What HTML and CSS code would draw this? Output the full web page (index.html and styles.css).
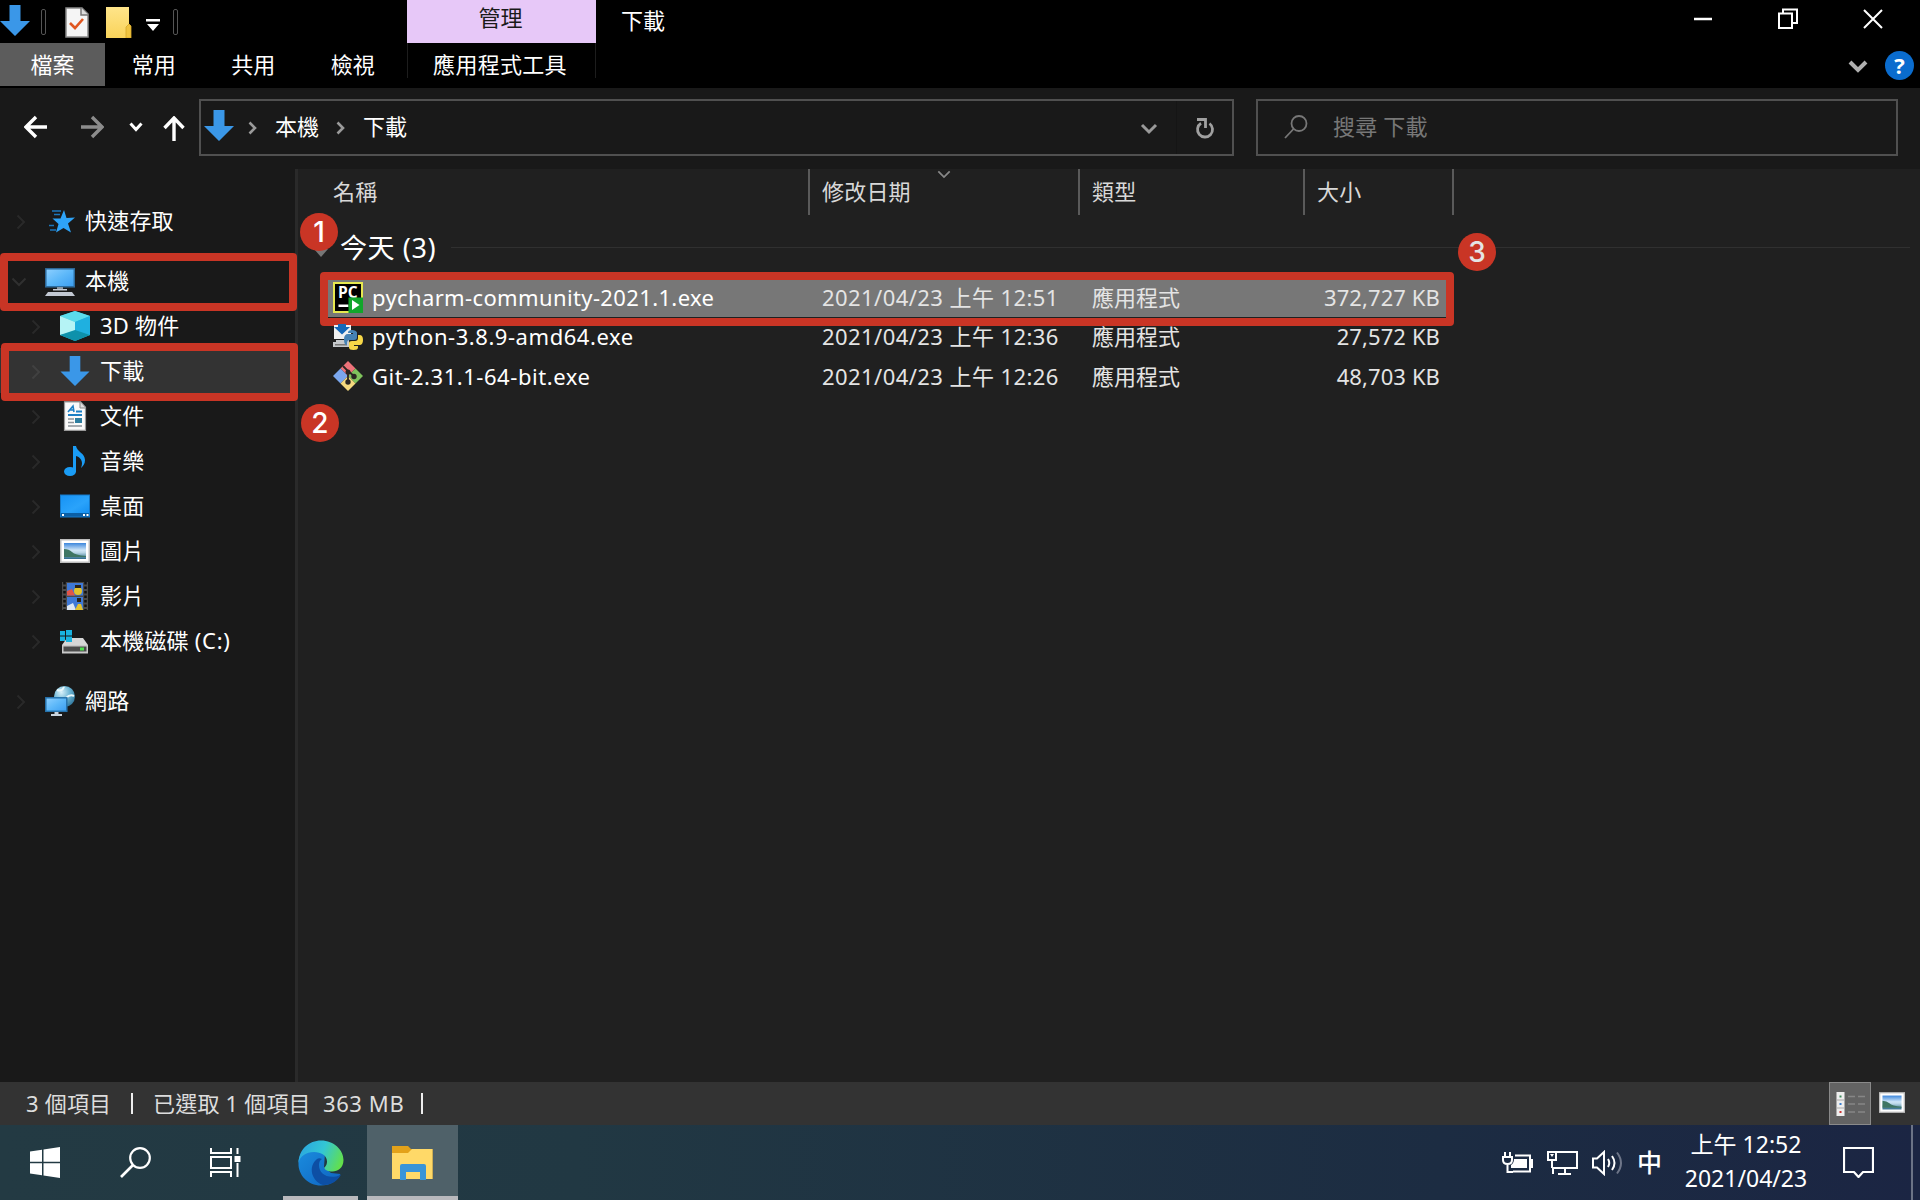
FILE: index.html
```html
<!DOCTYPE html>
<html lang="zh-Hant">
<head>
<meta charset="utf-8">
<title>下載</title>
<link rel="stylesheet" href="styles.css">
</head>
<body>
<svg width="0" height="0" class="defs">
  <defs>
    <linearGradient id="g-screen" x1="0" y1="0" x2="1" y2="1"><stop offset="0" stop-color="#8fd0ff"/><stop offset=".5" stop-color="#5db8f9"/><stop offset="1" stop-color="#3a9cf0"/></linearGradient>
    <linearGradient id="g-desk" x1="0" y1="0" x2="1" y2="1"><stop offset="0" stop-color="#1793f5"/><stop offset=".6" stop-color="#2aa3fb"/><stop offset="1" stop-color="#1590f2"/></linearGradient>
    <linearGradient id="g-photo" x1="0" y1="0" x2="0" y2="1"><stop offset="0" stop-color="#3c86dc"/><stop offset=".45" stop-color="#cfe6f7"/><stop offset=".6" stop-color="#b9d6e6"/><stop offset=".8" stop-color="#6f9fb4"/><stop offset="1" stop-color="#2f6a8c"/></linearGradient>
    <linearGradient id="g-folder" x1="0" y1="0" x2="0" y2="1"><stop offset="0" stop-color="#ffe58a"/><stop offset="1" stop-color="#f9d35a"/></linearGradient>
    <linearGradient id="g-edge-a" x1="0" y1=".3" x2="1" y2=".6"><stop offset="0" stop-color="#2aa6e0"/><stop offset=".5" stop-color="#33c6d4"/><stop offset="1" stop-color="#63e04a"/></linearGradient>
    <linearGradient id="g-edge-b" x1="0" y1="0" x2="1" y2="1"><stop offset="0" stop-color="#1b8fe0"/><stop offset="1" stop-color="#0f63c0"/></linearGradient>
    <radialGradient id="g-globe" cx=".35" cy=".3" r=".8"><stop offset="0" stop-color="#d8f1fa"/><stop offset=".5" stop-color="#6cb5d4"/><stop offset="1" stop-color="#2a6f95"/></radialGradient>
    <symbol id="down" viewBox="0 0 30 31"><path d="M9.500 0h11v16H30L15 31 0 16h9.500z" fill="#3a97e8"/></symbol>
    <symbol id="chev" viewBox="0 0 10 16"><path d="M1.500 1.500L8 8l-6.500 6.500" fill="none" stroke="currentColor" stroke-width="2"/></symbol>
    <symbol id="chevd" viewBox="0 0 16 10"><path d="M1.500 1.500L8 8l6.500-6.500" fill="none" stroke="currentColor" stroke-width="2"/></symbol>
    <symbol id="photo" viewBox="0 0 30 24"><rect width="30" height="24" fill="#bdbdbd"/><rect x="1.500" y="1.500" width="27" height="21" fill="#fff"/><rect x="4" y="4" width="22" height="16" fill="url(#g-photo)"/><path d="M4 10q5 0 8 3t14 4v1H4z" fill="#3f7663"/></symbol>
  </defs>
</svg>
<div class="window">
  <header class="titlebar">
    <div class="quick">
      <svg class="q-down" width="30" height="31"><use href="#down"/></svg>
      <i class="grip"></i>
      <svg class="q-check" width="24" height="31" viewBox="0 0 24 31"><path d="M1 1h16l6 6v23H1z" fill="#f5f5f5" stroke="#8a8a8a" stroke-width="1.500"/><path d="M16 1v7h7" fill="#ddd" stroke="#777" stroke-width="1.500"/><path d="M5 16l5 5 8-9" fill="none" stroke="#e0561f" stroke-width="2.600"/></svg>
      <svg class="q-folder" width="26" height="31" viewBox="0 0 26 31"><path d="M0 0h23v17l2 2v12H0z" fill="url(#g-folder)"/><path d="M20 31V20l3-3 2 2v12z" fill="#f0c440" stroke="#d5a728" stroke-width=".8"/></svg>
      <svg class="q-more" width="14" height="12" viewBox="0 0 14 12"><path d="M0 0h14v2.500H0zM1 5h12l-6 7z" fill="#fff"/></svg>
      <i class="grip"></i>
    </div>
    <div class="context-title">管理</div>
    <div class="win-title">下載</div>
    <div class="win-buttons">
      <svg width="20" height="30" viewBox="0 0 20 30"><path d="M1 15h18" stroke="#fff" stroke-width="2.500"/></svg>
      <svg width="20" height="30" viewBox="0 0 20 30"><g fill="none" stroke="#fff" stroke-width="2"><path d="M1 9.500h13V24H1z"/><path d="M5 9V5.500h14V19h-5"/></g></svg>
      <svg width="20" height="30" viewBox="0 0 20 30"><path d="M1 6l18 18M19 6L1 24" stroke="#fff" stroke-width="2"/></svg>
    </div>
  </header>
  <nav class="ribbon">
    <span class="tab file">檔案</span><span class="tab">常用</span><span class="tab">共用</span><span class="tab">檢視</span><span class="tab tools">應用程式工具</span>
    <div class="ribbon-end">
      <svg class="rb-chev" width="20" height="13" viewBox="0 0 20 13"><path d="M2 2l8 8 8-8" fill="none" stroke="#b0b0b0" stroke-width="4"/></svg>
      <span class="help">?</span>
    </div>
  </nav>
  <div class="address-row">
    <div class="arrows">
      <svg width="24" height="24" viewBox="0 0 24 24"><path d="M23 12H2M12 2L2 12l10 10" fill="none" stroke="#fff" stroke-width="3.400"/></svg>
      <svg width="24" height="24" viewBox="0 0 24 24"><path d="M1 12h21M12 2l10 10-10 10" fill="none" stroke="#8c8c8c" stroke-width="3.400"/></svg>
      <svg width="14" height="10" viewBox="0 0 14 10"><path d="M1.500 1.500L7 7.500l5.500-6" fill="none" stroke="#fff" stroke-width="3"/></svg>
      <svg width="22" height="25" viewBox="0 0 22 25"><path d="M11 25V2M1.500 12L11 2l9.500 10" fill="none" stroke="#fff" stroke-width="3.400"/></svg>
    </div>
    <div class="path">
      <svg class="p-down" width="30" height="31"><use href="#down"/></svg>
      <svg class="p-sep" width="9" height="14" viewBox="0 0 9 14"><path d="M1.500 1.500L7 7l-5.500 5.500" fill="none" stroke="currentColor" stroke-width="2.600"/></svg>
      <span class="crumb">本機</span>
      <svg class="p-sep" width="9" height="14" viewBox="0 0 9 14"><path d="M1.500 1.500L7 7l-5.500 5.500" fill="none" stroke="currentColor" stroke-width="2.600"/></svg>
      <span class="crumb">下載</span>
      <svg class="p-drop" width="18" height="12" viewBox="0 0 18 12"><path d="M2 2l7 7 7-7" fill="none" stroke="#999" stroke-width="3"/></svg>
      <div class="refresh"><svg width="20" height="22" viewBox="0 0 20 22"><path d="M14.500 5.500A7.500 7.500 0 1 1 6 5.200" fill="none" stroke="#a0a0a0" stroke-width="2.800"/><path d="M2 1.500h8.500V10" fill="none" stroke="#a0a0a0" stroke-width="2.800"/></svg></div>
    </div>
    <div class="search">
      <svg width="24" height="24" viewBox="0 0 24 24"><circle cx="15" cy="8.500" r="7.500" fill="none" stroke="#777" stroke-width="1.800"/><path d="M9.500 14L1 23" stroke="#777" stroke-width="1.800"/></svg>
      <span>搜尋 下載</span>
    </div>
  </div>
  <div class="body">
    <aside class="tree">
      <div class="node root"><svg class="exp" width="10" height="16"><use href="#chev"/></svg><svg class="ic" width="30" height="30" viewBox="0 0 30 30"><path d="M19 4l2.500 8 8.500-.5-7 6 3 9-7.500-4.500-7.500 4.500 2.500-8.500-6-5.500h8z" fill="#2ea3f7"/><path d="M7 5h9M9 8.500h6M4 19.500h5M5 24h6" stroke="#1c76ba" stroke-width="1.500"/></svg><span>快速存取</span></div>
      <div class="node root gap open"><svg class="exp" width="16" height="10"><use href="#chevd"/></svg><svg class="ic" width="30" height="30" viewBox="0 0 30 30"><rect x=".8" y="2.800" width="28.500" height="18" fill="url(#g-screen)" stroke="#2c6a9c" stroke-width="1.500"/><path d="M12 21h6v2h-6z" fill="#8a97a3"/><path d="M8 23h14v1.500H8zM3 26h24l3 4H0z" fill="#c3c9d3"/></svg><span>本機</span><b class="mark"></b><b class="badge">1</b></div>
      <div class="node"><svg class="exp" width="10" height="16"><use href="#chev"/></svg><svg class="ic" width="30" height="30" viewBox="0 0 30 30"><path d="M15 0l15 5v19l-15 6L0 24V5z" fill="#29bcd8"/><path d="M0 5l15-5 15 5-15 6z" fill="#5bdcec"/><path d="M0 5l15 6v10L0 24z" fill="#b5f3f5"/><path d="M15 11l15-6v19l-15-4z" fill="#1fb0e0"/><path d="M0 24l15-5 15 5-15 6z" fill="#0e91ab"/></svg><span>3D 物件</span></div>
      <div class="node current"><svg class="exp" width="10" height="16"><use href="#chev"/></svg><svg class="ic" width="30" height="30"><use href="#down"/></svg><span>下載</span><b class="mark"></b><b class="badge">2</b></div>
      <div class="node"><svg class="exp" width="10" height="16"><use href="#chev"/></svg><svg class="ic" width="30" height="30" viewBox="0 0 30 30"><path d="M4.500.8h16l5 5.500v23h-21z" fill="#fafafa" stroke="#999" stroke-width="1.200"/><path d="M20 1v6h5.500" fill="#ddd" stroke="#888"/><path d="M8 11l5-6 1 6M10 9h4" fill="none" stroke="#1b7fc4" stroke-width="1.600"/><path d="M16 10.500h6M8 14h14" stroke="#1b7fc4" stroke-width="2"/><path d="M8 18h6M8 21.500h6M8 25h14" stroke="#8b9299" stroke-width="1.500"/><path d="M15 17h7v5h-7z" fill="#2d7d9f"/></svg><span>文件</span></div>
      <div class="node"><svg class="exp" width="10" height="16"><use href="#chev"/></svg><svg class="ic" width="30" height="30" viewBox="0 0 30 30"><ellipse cx="10" cy="25.500" rx="6" ry="4.500" fill="#1a9cf5"/><path d="M13 0h3c1 6 9 7 9 14 0 4-2 6-4 8 3-7-1-11-5-12v16h-3z" fill="#1a9cf5"/></svg><span>音樂</span></div>
      <div class="node"><svg class="exp" width="10" height="16"><use href="#chev"/></svg><svg class="ic" width="30" height="30" viewBox="0 0 30 30"><rect y="3.500" width="30" height="23" fill="#1679c8"/><rect x="1" y="4.500" width="28" height="17.500" fill="url(#g-desk)"/><path d="M1 22h28v3.500H1z" fill="#0b5fa6"/><path d="M2 23h2v2H2zM23 23h2v2h-2zM26.500 23h2v2h-2z" fill="#fff"/></svg><span>桌面</span></div>
      <div class="node"><svg class="exp" width="10" height="16"><use href="#chev"/></svg><svg class="ic" width="30" height="24"><use href="#photo"/></svg><span>圖片</span></div>
      <div class="node"><svg class="exp" width="10" height="16"><use href="#chev"/></svg><svg class="ic" width="30" height="30" viewBox="0 0 30 30"><path d="M2 1h26v28H2z" fill="#4a4a4a"/><path d="M4.500 1v28M25.500 1v28" stroke="#111" stroke-width="2.500" stroke-dasharray="2.500 2"/><path d="M7 2h16v12.500H7z" fill="#3e78d6"/><path d="M7 16h16v13H7z" fill="#3e78d6"/><path d="M7 10l5-2 3 6.500H7z" fill="#e25548"/><circle cx="18" cy="10" r="4" fill="#e3c22d"/><path d="M15 4h6v3h-6z" fill="#2a2318"/><path d="M7 25l6-3 3 7H7z" fill="#dbe6f4"/><path d="M15 29l3-6h3l2 6z" fill="#e3c22d"/><path d="M17 17h4v4h-4z" fill="#2a2318"/></svg><span>影片</span></div>
      <div class="node"><svg class="exp" width="10" height="16"><use href="#chev"/></svg><svg class="ic" width="30" height="30" viewBox="0 0 30 30"><path d="M7 12h16l5 7H2z" fill="#d7d7d7"/><path d="M2 19h26v8.500H2z" fill="#c9c9c9"/><path d="M3.500 20.500h23v5h-23z" fill="#4b4b4b"/><rect x="20" y="21.500" width="4" height="3" fill="#4fe04f"/><path d="M0 5h5v4.500H0zM6 4h6v5.500H6zM0 10.500h5V15H0zM6 10.500h6V16H6z" fill="#19b3e0"/></svg><span>本機磁碟 <em>(C:)</em></span></div>
      <div class="node root gap"><svg class="exp" width="10" height="16"><use href="#chev"/></svg><svg class="ic" width="30" height="30" viewBox="0 0 30 30"><circle cx="19.500" cy="10.500" r="10.500" fill="url(#g-globe)"/><path d="M12 4q5 2 7-3M21 12q4-4 8-2" stroke="#e9f7fb" stroke-width="2" fill="none"/><rect x=".8" y="11.800" width="21" height="13.500" fill="url(#g-screen)" stroke="#2673ad" stroke-width="1.500"/><path d="M9.500 26h4v2h-4zM6 28h11v2H6z" fill="#c9d4de"/></svg><span>網路</span></div>
    </aside>
    <main class="files">
      <div class="cols head">
        <span>名稱</span><span>修改日期<svg class="sort" width="14" height="9" viewBox="0 0 16 10"><use href="#chevd"/></svg></span><span>類型</span><span>大小</span>
      </div>
      <div class="group"><svg class="tri" width="14" height="8" viewBox="0 0 14 8"><path d="M0 0h14L7 8z" fill="#777"/></svg><span>今天 (3)</span><i></i></div>
      <div class="cols row selected">
        <span class="name"><svg width="30" height="31" viewBox="0 0 30 31"><rect width="30" height="31" fill="#e6e84f"/><rect x="2" y="2" width="26" height="27" fill="#000"/><text x="5" y="16" class="pc">PC</text><path d="M5.500 22.500h10v2.500h-10z" fill="#fff"/><path d="M15.500 15.500H30V31H15.500z" fill="#11a62b"/><path d="M19 18l7.500 5-7.500 5z" fill="#fff"/></svg><em class="long">pycharm-community-2021.1.exe</em></span><span class="date">2021/04/23 上午 12:51</span><span>應用程式</span><span class="size">372,727 KB</span>
        <b class="mark"></b><b class="badge">3</b>
      </div>
      <div class="cols row">
        <span class="name"><svg width="30" height="30" viewBox="0 0 30 30"><path d="M1 3h17v14H1z" fill="#f0f0f0"/><path d="M3 18h13v2H3zM0 20h16v5H0z" fill="#c6c9cc"/><path d="M2 22h12v1.500H2z" fill="#777"/><path d="M5 2h8v3h4l-8 7.500L1 5h4z" fill="#1668b8"/><path d="M15 10.500q0-2.500 4-2.500t5 2.500v5q0 2.500-3 2.500h-4q-3 0-3 3v2q-3 0-3-5.500t4-5.500h5v-1h-5z" fill="#4682b4"/><path d="M25 13h1.500q3.500 0 3.500 5t-3.500 5H21v1h4v1.500q0 2.500-4.500 2.500T16 25.500V21q0-2 3-2h3q3 0 3-3z" fill="#f7d748"/></svg><em>python-3.8.9-amd64.exe</em></span><span class="date">2021/04/23 上午 12:36</span><span>應用程式</span><span class="size">27,572 KB</span>
      </div>
      <div class="cols row">
        <span class="name"><svg width="30" height="30" viewBox="0 0 30 30"><path d="M15 0l7.500 7.500L15 15 7.500 7.500z" fill="#ed7279"/><path d="M7.500 7.500L15 15l-7.500 7.500L0 15z" fill="#7ba7ee"/><path d="M22.500 7.500L30 15l-7.500 7.500L15 15z" fill="#7fc35c"/><path d="M15 15l7.500 7.500L15 30l-7.500-7.500z" fill="#f5d97e"/><path d="M10 5l5 5v11M15 10l6 5" stroke="#2a2622" stroke-width="1.800" fill="none"/><circle cx="15" cy="11" r="2.500" fill="#2a2622"/><circle cx="15" cy="21" r="2.700" fill="#2a2622"/><circle cx="21" cy="15.500" r="2.700" fill="#2a2622"/></svg><em>Git-2.31.1-64-bit.exe</em></span><span class="date">2021/04/23 上午 12:26</span><span>應用程式</span><span class="size">48,703 KB</span>
      </div>
    </main>
  </div>
  <footer class="status">
    <span class="st1">3 個項目</span><i></i><span class="st2">已選取 1 個項目</span><span class="st3">363 MB</span><i></i>
    <div class="views">
      <div class="view on"><svg width="30" height="24" viewBox="0 0 30 24"><path d="M0 0h9v24H0z" fill="#eee"/><path d="M0 8h9M0 16h9M.5 0v24M8.500 0v24" stroke="#aaa"/><path d="M3.500 3.500h2v2h-2z" fill="#3a8a5a"/><path d="M3.500 11h2v2h-2z" fill="#3b7fd0"/><path d="M3.500 19h2v2h-2z" fill="#c33"/><path d="M12 4.500h7M22 4.500h7M12 12h7M22 12h7M12 20h7M22 20h7" stroke="#868686" stroke-width="1.500"/></svg></div>
      <div class="view"><svg width="26" height="21" viewBox="0 0 30 24"><use href="#photo"/></svg></div>
    </div>
  </footer>
  <div class="taskbar">
    <div class="task"><svg width="30" height="31" viewBox="0 0 30 31"><path d="M0 4.500l12-1.800v12H0zM13.500 2.400L30 0v14.700H13.500zM0 16.300h12v12L0 26.500zM13.500 16.300H30V31l-16.500-2.400z" fill="#fff"/></svg></div>
    <div class="task"><svg width="31" height="31" viewBox="0 0 31 31"><circle cx="20" cy="11" r="9.800" fill="none" stroke="#fff" stroke-width="2.200"/><path d="M13 18L1 30" stroke="#fff" stroke-width="2.600"/></svg></div>
    <div class="task"><svg width="31" height="29" viewBox="0 0 31 29"><g fill="none" stroke="#fff" stroke-width="2"><path d="M1 0v5h20V0M1 29v-5h20v5M1 9h20v11H1zM27.500 0v6M27.500 15v14"/></g><path d="M24.500 8h6v6h-6z" fill="#fff"/></svg></div>
    <div class="task run edge"><svg width="46" height="46" viewBox="0 0 46 46"><path d="M.5 23C1 10 11 5 20 5l7 8-1 14 7 6 9.500 1C39 41 32 45.500 23 45.500 10 45.500 0 35 .5 23z" fill="url(#g-edge-b)"/><path d="M.5 23C1 9 11 .5 23 .5 36 .5 45.500 10 45.500 20c0 8-6 11.500-11 11.500-6 0-8.500-2.500-8-4 2-2 2.500-4 2.500-6 0-6-6-9.500-13-9.500C8 12 2 16 .5 23z" fill="url(#g-edge-a)"/><path d="M19 19c-9 7-6 22 6 26 8 .5 14-4 18-10-13 5-22-1-22-10 0-3 1-5 3-6-2-1-3.500-1-5 0z" fill="#0d4fa4"/></svg></div>
    <div class="task run active"><svg width="41" height="34" viewBox="0 0 41 34"><path d="M0 0h16l3 3h21.500v30H0z" fill="#e3a21a"/><path d="M0 7h16l4-4h20.500v30H0z" fill="#ffd968"/><path d="M8 20q0-2 2-2h22q2 0 2 2v14h-6v-8H14v8H8z" fill="#3994d8"/></svg></div>
    <div class="tray">
      <svg width="31" height="24" viewBox="0 0 31 24"><g fill="none" stroke="#fff" stroke-width="2"><path d="M13 4.500h15v16H11M28 9h2v7h-2"/><path d="M3 1v5M8 1v5M1 6h9v3q0 4-4.500 4T1 9zM5.500 13v8H11"/></g><path d="M12 8h13v9H9v-3q3-2 3-6z" fill="#fff"/></svg>
      <svg width="31" height="26" viewBox="0 0 31 26"><g fill="none" stroke="#fff" stroke-width="2"><path d="M10 2h20v16H6v6M18 18v6M11 24h13"/><path d="M1 2h8v8H1zM5 10v8"/></g><path d="M3 4l2 3 2-3z" fill="#fff"/></svg>
      <svg width="31" height="26" viewBox="0 0 31 26"><g fill="none" stroke="#fff" stroke-width="2"><path d="M1 8.500h4L12 2v22l-7-6.500H1zM16 9q2.500 4 0 8M20 6q5 7 0 14"/><path d="M25 2.500q8 10.500 0 21" stroke="#6e7689"/></g></svg>
      <span class="ime">中</span>
    </div>
    <div class="clock"><span>上午 12:52</span><span>2021/04/23</span></div>
    <svg class="note" width="31" height="31" viewBox="0 0 31 31"><path d="M1 1h29v24H20l-4.500 5L11 25H1z" fill="none" stroke="#fff" stroke-width="2.200"/></svg>
    <i class="peek"></i>
  </div>
</div>
</body>
</html>
```
FILE: styles.css
```css
* { box-sizing: border-box; }
body { margin: 0; background: #000; }
svg { display: block; flex: none; }
em { font-style: normal; }
.defs { position: absolute; }
.window {
  width: 1920px; height: 1200px; overflow: hidden;
  display: flex; flex-direction: column;
  font-family: "Noto Sans", "Noto Sans CJK TC", sans-serif;
  font-size: 22px; line-height: 30px; color: #fff; white-space: nowrap;
}
.window > * { flex: none; }

.titlebar { height: 43px; display: flex; background: #000; }
.quick { width: 407px; display: flex; align-items: flex-start; }
.q-down { margin: 5px 12px 0 0; }
.grip { width: 5px; height: 26px; margin-top: 9px; border: 1px solid #555; border-radius: 2px; }
.q-down + .grip { margin-left: -1px; }
.q-check { margin: 7px 0 0 19px; }
.q-folder { margin: 7px 0 0 17px; }
.q-more { margin: 19px 13px 0 14px; }
.context-title { width: 189px; background: #e7c8f8; color: #1a1a1a; text-align: center; padding: 2px 2px 0 0; }
.win-title { padding: 5px 0 0 25px; }
.win-buttons { margin-left: auto; display: flex; gap: 65px; padding: 4px 37px 0 0; }

.ribbon { height: 45px; display: flex; background: #000; }
.tab { height: 43px; width: 99.500px; padding: 6px 2px 0 0; text-align: center; }
.tab.file { width: 105px; background: #5c5c5c; padding-right: 0; }
.tab.tools { width: 189px; margin-left: 3px; height: 35px; border: solid #1d1d1d; border-width: 0 1px; letter-spacing: .3px; }
.ribbon-end { margin-left: auto; display: flex; gap: 17px; padding: 8px 6px 0 0; }
.rb-chev { margin-top: 9px; }
.help { width: 29px; height: 29px; border-radius: 50%; background: #0a6cce; font: bold 22px/29px "Open Sans", sans-serif; text-align: center; }

.address-row { height: 81px; background: #191919; display: flex; padding-top: 11px; }
.arrows { width: 199px; height: 57px; display: flex; align-items: center; padding: 0 0 1px 24px; }
.arrows svg:nth-child(2) { margin-left: 32px; }
.arrows svg:nth-child(3) { margin-left: 25px; }
.arrows svg:nth-child(4) { margin-left: 20px; margin-top: 3px; }
.path { width: 1035px; height: 57px; border: 2px solid #505050; display: flex; align-items: center; padding-left: 3px; }
.p-down { margin-top: -5px; }
.p-sep { color: #9a9a9a; margin: 1px 18px 0 14px; }
.crumb + .p-sep { margin-left: 17px; }
.crumb { width: 44px; padding-bottom: 4px; }
.p-drop { margin: 3px 0 0 auto; }
.refresh { margin-left: 18px; width: 56px; height: 53px; border-left: 1px solid #151515; display: grid; place-items: center; padding-top: 3px; }
.search { width: 642px; height: 57px; margin-left: 22px; border: 2px solid #505050; display: flex; align-items: center; gap: 25px; padding-left: 26px; color: #777; letter-spacing: .2px; }
.search svg { margin-top: -1px; }
.search span { padding-bottom: 4px; }

.body { height: 913px; display: flex; background: #202020; }
.tree { width: 298px; background: #191919; border-right: 3px solid #2a2a2a; padding-top: 29px; }
.node { position: relative; height: 45px; display: flex; align-items: center; padding-left: 31px; }
.node.root { padding-left: 16px; }
.node .exp { width: 10px; color: #292929; margin-top: 3px; }
.node.open { padding-left: 11px; }
.node.open .exp { width: 16px; margin: 3px 0 0; color: #303030; }
.node.current .exp { color: #414141; }
.node.open .ic { margin-left: 18px; }
.node .ic { margin-left: 19px; }
.node span { margin-left: 10px; padding-bottom: 2px; letter-spacing: .2px; }
.node em { letter-spacing: .7px; }
.node.gap { margin-top: 15px; }
.node.current { background: #333; }
.mark { position: absolute; border: 8px solid #c93525; border-radius: 4px; }
.node .mark { left: 0; top: -5px; width: 297px; height: 58px; }
.node.current .mark { left: 1px; top: -5px; }
.badge {
  position: absolute; width: 38px; height: 38px; border-radius: 50%; background: #c93525;
  font: 500 28px/38px Inter, sans-serif; text-align: center; z-index: 2;
}
.open .badge { left: 300px; top: -45px; }
.current .badge { left: 301px; top: 56px; }

.files { flex: 1; }
.cols { display: grid; grid-template-columns: 475px 270px 225px 151px; position: relative; padding-left: 35px; color: #e4e4e4; }
.head { height: 46px; color: #d8d8d8; }
.head span { position: relative; padding: 7px 0 0 12px; border-left: 2px solid #5a5a5a; letter-spacing: .2px; }
.head span:first-child { border: 0; padding-left: 0; }
.head span:last-child { border-right: 2px solid #5a5a5a; }
.sort { position: absolute; left: 127px; top: 1px; color: #888; }
.group { height: 63px; padding: 6px 10px 0 16px; display: flex; align-items: center; font-size: 27px; }
.group span { margin: -4px 0 0 12px; letter-spacing: .6px; }
.tri { margin-top: 6px; }
.group i { flex: 1; height: 1px; background: #303030; margin: -5px 0 0 15px; }
.row { height: 39.300px; line-height: 38px; }
.row span { padding-left: 14px; }
.row .name { padding: 0; display: flex; align-items: center; gap: 9px; color: #fff; }
.name em { letter-spacing: .55px; padding-bottom: 1px; }
.name .long { letter-spacing: .37px; }
.date { letter-spacing: .43px; }
.row .size { padding: 0 14px 0 0; text-align: right; letter-spacing: .1px; }
.row.selected { background: linear-gradient(#777, #777) 26px 0 / 1125px 100% no-repeat; }
.row .mark { left: 22px; top: -6px; width: 1134px; height: 54px; }
.row .badge { left: 1160px; top: -45px; }
.pc { font: bold 15.500px "Open Sans", sans-serif; fill: #fff; }

.status { height: 43px; background: #333; display: flex; align-items: center; color: #ddd; padding-left: 26px; }
.status > i { width: 2px; height: 21px; background: #eee; }
.status span { padding-bottom: 2px; letter-spacing: .2px; }
.st1 { width: 105px; }
.st2 { width: 170px; margin-left: 20px; }
.status .st3 { width: 98px; letter-spacing: .6px; }
.views { margin-left: auto; display: flex; padding-right: 7px; }
.view { width: 42px; height: 43px; display: grid; place-items: center; padding-bottom: 3px; }
.view.on { background: #636363; border: 1px solid #8a8a8a; padding: 0 0 0 2px; }

.taskbar { height: 75px; display: flex; background: linear-gradient(90deg, #233a43, #213843 30%, #1c2c42 75%, #1b2543); }
.task { width: 90px; display: grid; place-items: center; }
.task.run { border-bottom: 4px solid #b9b9bd; padding-top: 4px; }
.task.edge { width: 75px; margin: 0 9px 0 13px; }
.task.active { width: 91px; background: #4f6169; }
.tray { margin-left: auto; display: flex; align-items: center; gap: 14px; }
.ime { font-size: 25px; font-weight: 500; padding-bottom: 2px; }
.clock { width: 126px; margin: 2px 34px 0 21px; text-align: center; display: flex; flex-direction: column; line-height: 34px; font-size: 23px; }
.note { margin-top: 22px; }
.peek { width: 2px; background: #6b7386; margin: 0 7px 0 37px; }
```
